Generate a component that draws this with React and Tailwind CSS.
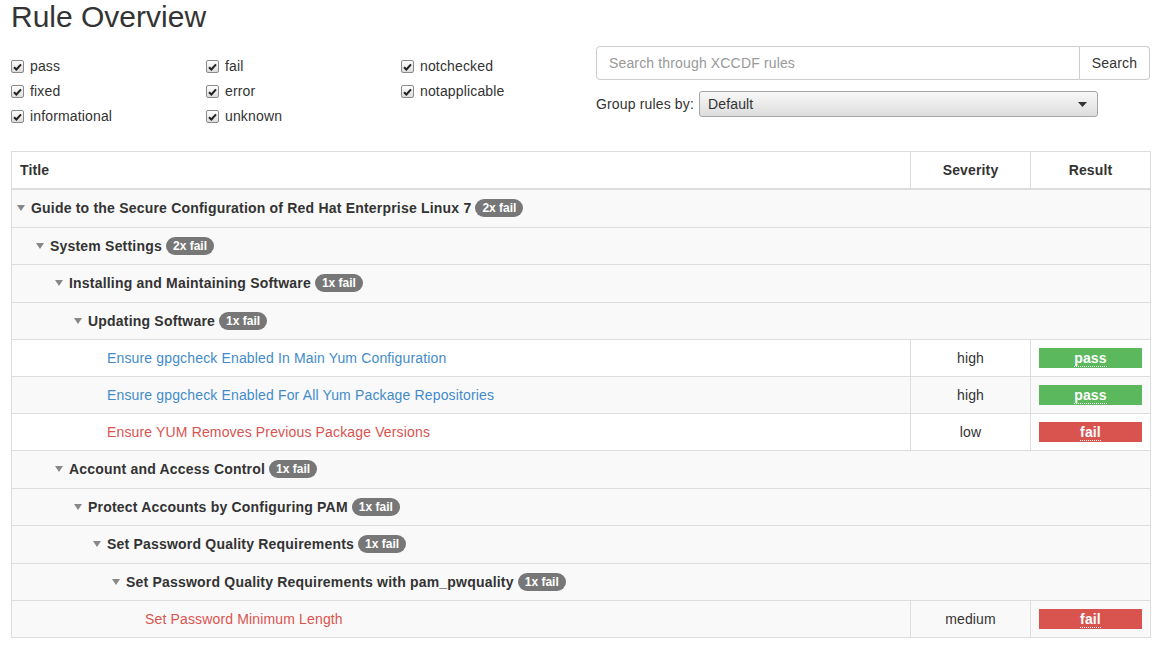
import React from "react";

const Check = () => (
  <span className="inline-flex w-[13px] h-[13px] items-center justify-center rounded-[2px] border border-[#8a8a8a] bg-gradient-to-b from-white to-[#dcdcdc] shrink-0">
    <svg width="9" height="8" viewBox="0 0 9 8">
      <path d="M1 4.2 L3.4 6.5 L8 1.3" fill="none" stroke="#222" strokeWidth="2" />
    </svg>
  </span>
);

const CB = ({ label }) => (
  <label className="flex items-center h-[25px] gap-[6px]">
    <Check />
    <span>{label}</span>
  </label>
);

const Tri = () => (
  <svg width="8" height="6" viewBox="0 0 8 6" className="shrink-0 mr-[6px]">
    <path d="M0 0 L8 0 L4 6 Z" fill="#888" />
  </svg>
);

const Badge = ({ n }) => (
  <span className="ml-[4px] inline-block rounded-[10px] bg-[#777] px-[7px] py-[3px] text-[12px] font-bold leading-[12px] tracking-normal text-white">
    {n}x fail
  </span>
);

const rows = [
  { t: "g", l: 0, text: "Guide to the Secure Configuration of Red Hat Enterprise Linux 7", n: 2 },
  { t: "g", l: 1, text: "System Settings", n: 2 },
  { t: "g", l: 2, text: "Installing and Maintaining Software", n: 1 },
  { t: "g", l: 3, text: "Updating Software", n: 1 },
  { t: "r", l: 4, text: "Ensure gpgcheck Enabled In Main Yum Configuration", sev: "high", res: "pass", bg: "white" },
  { t: "r", l: 4, text: "Ensure gpgcheck Enabled For All Yum Package Repositories", sev: "high", res: "pass", bg: "gray" },
  { t: "r", l: 4, text: "Ensure YUM Removes Previous Package Versions", sev: "low", res: "fail", bg: "white" },
  { t: "g", l: 2, text: "Account and Access Control", n: 1 },
  { t: "g", l: 3, text: "Protect Accounts by Configuring PAM", n: 1 },
  { t: "g", l: 4, text: "Set Password Quality Requirements", n: 1 },
  { t: "g", l: 5, text: "Set Password Quality Requirements with pam_pwquality", n: 1 },
  { t: "r", l: 6, text: "Set Password Minimum Length", sev: "medium", res: "fail", bg: "gray" },
];

export default function App() {
  return (
    <div className="font-['Liberation_Sans',Arial,sans-serif] text-[14px] tracking-[0.15px] text-[#333] bg-white min-h-[649px] pl-[11px] pr-[9px]">
      <h2 className="text-[30px] leading-[33px] font-medium tracking-normal m-0">Rule Overview</h2>
      <div className="grid grid-cols-[585px_1fr] mt-[13px]">
        <div className="pt-[8px] grid grid-cols-[195px_195px_195px]">
          <CB label="pass" />
          <CB label="fail" />
          <CB label="notchecked" />
          <CB label="fixed" />
          <CB label="error" />
          <CB label="notapplicable" />
          <CB label="informational" />
          <CB label="unknown" />
        </div>
        <div>
          <div className="flex h-[34px]">
            <div className="flex-1 flex items-center border border-[#ccc] rounded-l-[4px] px-[12px] text-[#999]">
              Search through XCCDF rules
            </div>
            <div className="w-[70px] flex items-center justify-center border border-l-0 border-[#ccc] rounded-r-[4px] bg-white">
              Search
            </div>
          </div>
          <div className="flex items-center mt-[11px]">
            <span className="mr-[5px]">Group rules by:</span>
            <div className="w-[399px] h-[26px] flex items-center justify-between rounded-[3px] border border-[#a5a5a5] bg-gradient-to-b from-[#f8f8f8] to-[#dddddd] pl-[8px] pr-[10px]">
              <span>Default</span>
              <svg width="9" height="5" viewBox="0 0 9 5">
                <path d="M0 0 L9 0 L4.5 5 Z" fill="#333" />
              </svg>
            </div>
          </div>
        </div>
      </div>
      <table className="mt-[22px] w-[1140px] border border-[#ddd] table-fixed">
        <colgroup>
          <col />
          <col className="w-[120px]" />
          <col className="w-[120px]" />
        </colgroup>
        <thead>
          <tr className="bg-white">
            <th className="text-left font-bold px-[8px] py-[8px] leading-5 border-b-2 border-[#ddd] border-r">Title</th>
            <th className="text-center font-bold px-[8px] py-[8px] leading-5 border-b-2 border-[#ddd] border-r">Severity</th>
            <th className="text-center font-bold px-[8px] py-[8px] leading-5 border-b-2 border-[#ddd]">Result</th>
          </tr>
        </thead>
        <tbody>
          {rows.map((r, i) =>
            r.t === "g" ? (
              <tr key={i} className="bg-[#f9f9f9]">
                <td colSpan={3} className="border-t border-[#ddd] py-[8px] leading-5" style={{ paddingLeft: 5 + r.l * 19 }}>
                  <div className="flex items-center h-[20.5px] font-bold">
                    <Tri />
                    <span className="tracking-[0.2px]">{r.text}</span>
                    <Badge n={r.n} />
                  </div>
                </td>
              </tr>
            ) : (
              <tr key={i} className={r.bg === "gray" ? "bg-[#f9f9f9]" : "bg-white"}>
                <td className="border-t border-r border-[#ddd] py-[8px] leading-5" style={{ paddingLeft: 19 + r.l * 19 }}>
                  <span className={r.res === "pass" ? "text-[#428bca]" : "text-[#d9534f]"}>{r.text}</span>
                </td>
                <td className="border-t border-r border-[#ddd] py-[8px] px-[8px] leading-5 text-center">{r.sev}</td>
                <td className="border-t border-[#ddd] py-[8px] px-[8px] leading-5">
                  <div className={`h-5 flex items-center justify-center font-bold text-white ${r.res === "pass" ? "bg-[#5cb85c]" : "bg-[#d9534f]"}`}>
                    <span className="leading-[16px] border-b border-dotted border-white">{r.res}</span>
                  </div>
                </td>
              </tr>
            )
          )}
        </tbody>
      </table>
    </div>
  );
}
